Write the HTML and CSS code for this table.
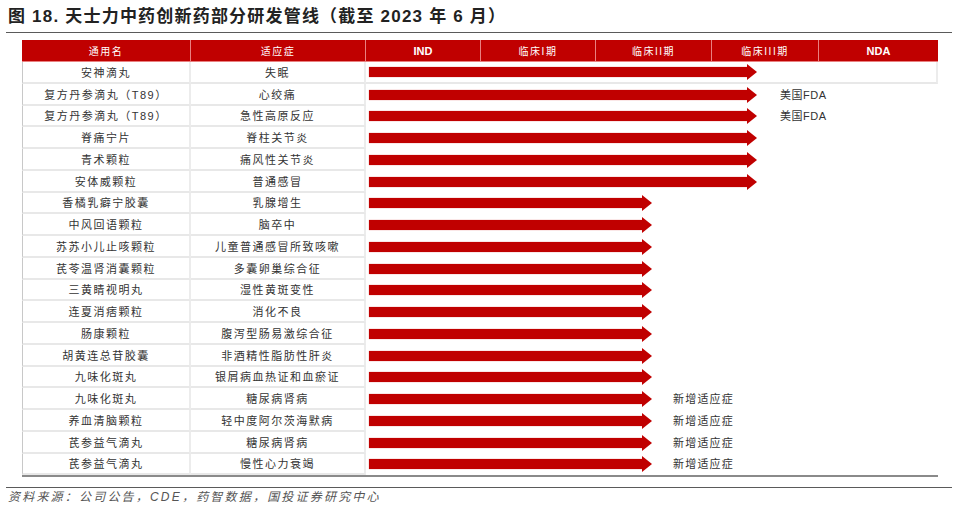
FILE: index.html
```html
<!DOCTYPE html>
<html lang="zh">
<head>
<meta charset="utf-8">
<link rel="stylesheet" href="styles.css">
</head>
<body>
<div class="page">
  <h1 class="title">图 18. 天士力中药创新药部分研发管线（截至 2023 年 6 月）</h1>
  <div class="rule"></div>
  <div class="table">
    <div class="head">
      <div class="hc">通用名</div>
      <div class="hc">适应症</div>
      <div class="hc en">IND</div>
      <div class="hc">临床I期</div>
      <div class="hc">临床II期</div>
      <div class="hc">临床III期</div>
      <div class="hc en">NDA</div>
    </div>
    <div class="row first"><div class="c">安神滴丸</div><div class="c">失眠</div><div class="pipe"><div class="arrow p3"><i></i><b></b></div></div></div>
    <div class="row"><div class="c">复方丹参滴丸（T89）</div><div class="c">心绞痛</div><div class="pipe"><div class="arrow p3"><i></i><b></b></div><span class="note fda">美国FDA</span></div></div>
    <div class="row"><div class="c">复方丹参滴丸（T89）</div><div class="c">急性高原反应</div><div class="pipe"><div class="arrow p3"><i></i><b></b></div><span class="note fda">美国FDA</span></div></div>
    <div class="row"><div class="c">脊痛宁片</div><div class="c">脊柱关节炎</div><div class="pipe"><div class="arrow p3"><i></i><b></b></div></div></div>
    <div class="row"><div class="c">青术颗粒</div><div class="c">痛风性关节炎</div><div class="pipe"><div class="arrow p3"><i></i><b></b></div></div></div>
    <div class="row"><div class="c">安体威颗粒</div><div class="c">普通感冒</div><div class="pipe"><div class="arrow p3"><i></i><b></b></div></div></div>
    <div class="row"><div class="c">香橘乳癖宁胶囊</div><div class="c">乳腺增生</div><div class="pipe"><div class="arrow p2"><i></i><b></b></div></div></div>
    <div class="row"><div class="c">中风回语颗粒</div><div class="c">脑卒中</div><div class="pipe"><div class="arrow p2"><i></i><b></b></div></div></div>
    <div class="row"><div class="c">苏苏小儿止咳颗粒</div><div class="c">儿童普通感冒所致咳嗽</div><div class="pipe"><div class="arrow p2"><i></i><b></b></div></div></div>
    <div class="row"><div class="c">芪苓温肾消囊颗粒</div><div class="c">多囊卵巢综合征</div><div class="pipe"><div class="arrow p2"><i></i><b></b></div></div></div>
    <div class="row"><div class="c">三黄睛视明丸</div><div class="c">湿性黄斑变性</div><div class="pipe"><div class="arrow p2"><i></i><b></b></div></div></div>
    <div class="row"><div class="c">连夏消痞颗粒</div><div class="c">消化不良</div><div class="pipe"><div class="arrow p2"><i></i><b></b></div></div></div>
    <div class="row"><div class="c">肠康颗粒</div><div class="c">腹泻型肠易激综合征</div><div class="pipe"><div class="arrow p2"><i></i><b></b></div></div></div>
    <div class="row"><div class="c">胡黄连总苷胶囊</div><div class="c">非酒精性脂肪性肝炎</div><div class="pipe"><div class="arrow p2"><i></i><b></b></div></div></div>
    <div class="row"><div class="c">九味化斑丸</div><div class="c">银屑病血热证和血瘀证</div><div class="pipe"><div class="arrow p2"><i></i><b></b></div></div></div>
    <div class="row"><div class="c">九味化斑丸</div><div class="c">糖尿病肾病</div><div class="pipe"><div class="arrow p2"><i></i><b></b></div><span class="note">新增适应症</span></div></div>
    <div class="row"><div class="c">养血清脑颗粒</div><div class="c">轻中度阿尔茨海默病</div><div class="pipe"><div class="arrow p2"><i></i><b></b></div><span class="note">新增适应症</span></div></div>
    <div class="row"><div class="c">芪参益气滴丸</div><div class="c">糖尿病肾病</div><div class="pipe"><div class="arrow p2"><i></i><b></b></div><span class="note">新增适应症</span></div></div>
    <div class="row"><div class="c">芪参益气滴丸</div><div class="c">慢性心力衰竭</div><div class="pipe"><div class="arrow p2"><i></i><b></b></div><span class="note">新增适应症</span></div></div>
  </div>
  <div class="rule foot"></div>
  <p class="source">资料来源：公司公告，CDE，药智数据，国投证券研究中心</p>
</div>
</body>
</html>
```

FILE: styles.css
```css
* { box-sizing: border-box; }
html, body { margin: 0; padding: 0; background: #fff; }
body {
  font-family: "Liberation Sans", "Noto Sans CJK SC", sans-serif;
  color: #333;
}
.page {
  width: 957px;
  height: 511px;
  padding: 0 5px 0 6px;
}
.title {
  margin: 0;
  padding: 6px 0 0 2px;
  height: 32px;
  font-size: 17px;
  line-height: 22px;
  font-weight: bold;
  letter-spacing: 1.2px;
  color: #222;
  white-space: nowrap;
}
.rule {
  height: 1px;
  background: #5a5a5a;
}
.table {
  margin: 7px 0 0 16px;
  width: 916px;
  border-bottom: 2px solid #8a8a8a;
}
.head {
  display: grid;
  grid-template-columns: 169px 175px 115px 115px 116px 107px 119px;
  height: 22px;
  background: #c00000;
}
.hc {
  display: flex;
  align-items: center;
  justify-content: center;
  color: #fff;
  font-size: 10px;
  letter-spacing: 1.5px;
  border-right: 1px solid #e98080;
  border-bottom: 1px solid #e98080;
}
.hc:last-child { border-right: none; }
.hc.en { font-weight: bold; font-size: 11px; letter-spacing: 0; }
.row {
  display: grid;
  grid-template-columns: 169px 175px 572px;
  height: 21.75px;
}
.c {
  display: flex;
  align-items: center;
  justify-content: center;
  font-size: 11px;
  letter-spacing: 1.5px;
  color: #333;
  border-bottom: 2px solid #e8e8e8;
  border-right: 2px solid #ececec;
  white-space: nowrap;
}
.row .c:first-child { border-left: 1px solid #c8c8c8; }
.pipe {
  display: flex;
  align-items: center;
  padding-left: 3px;
}
.row.first .pipe {
  border-right: 2px solid #ececec;
  border-bottom: 2px solid #e8e8e8;
}
.arrow {
  display: flex;
  align-items: center;
  flex: none;
}
.arrow.p3 { width: 388px; }
.arrow.p2 { width: 283px; }
.arrow i {
  flex: 1;
  height: 10px;
  background: #c00000;
  box-shadow: 0 0 1px #e07070;
}
.arrow b {
  width: 0;
  height: 0;
  border-left: 10px solid #c00000;
  border-top: 8px solid transparent;
  border-bottom: 8px solid transparent;
}
.note {
  margin-left: 21px;
  margin-top: -2px;
  font-size: 11px;
  letter-spacing: 1.2px;
  color: #333;
  white-space: nowrap;
}
.note.fda { margin-left: 23px; letter-spacing: 0.5px; }
.rule.foot { margin-top: 10px; }
.source {
  margin: 0;
  padding-left: 2px;
  font-size: 12px;
  line-height: 19px;
  font-style: italic;
  color: #555;
  letter-spacing: 2.2px;
  white-space: nowrap;
}
```
